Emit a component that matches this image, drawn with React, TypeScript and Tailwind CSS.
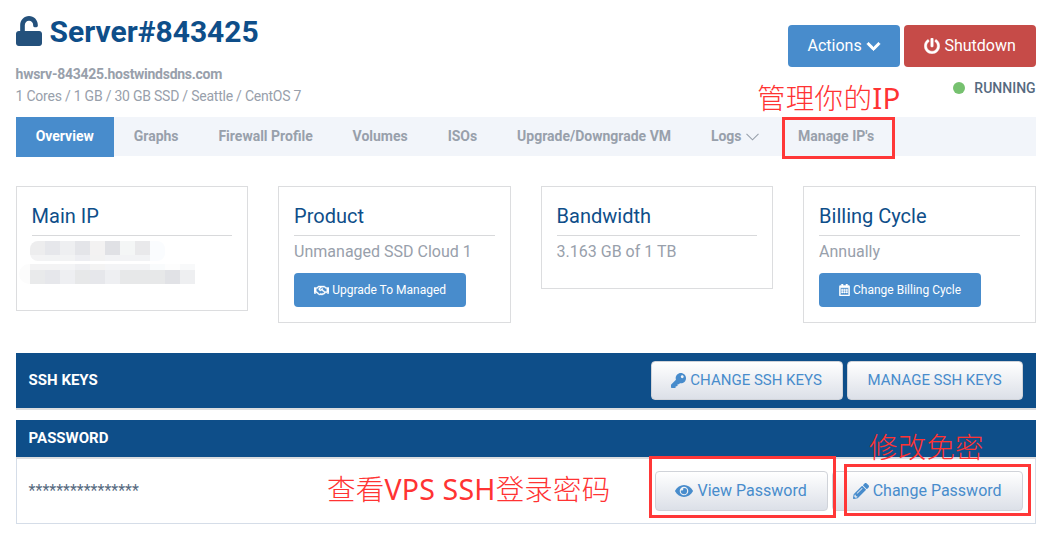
import type { ReactNode } from "react";
import {
  FaUnlock,
  FaChevronDown,
  FaPowerOff,
  FaKey,
  FaPencilAlt,
  FaRegCalendarAlt,
  FaRegHandshake,
} from "react-icons/fa";

const tabs = ["Graphs", "Firewall Profile", "Volumes", "ISOs", "Upgrade/Downgrade VM"];

// Shades of the obscured address blocks, one entry per mosaic cell.
const maskTop = ["#ededee", "#e6e7eb", "#eeeff1", "#e4e5e9", "#f3f2f2", "#e0e1e5", "#f4f6f6", "#e9e9eb", "#fafcfe"];
const maskTopFade = ["#f3f3f4", "#f2f3f4", "#f2f3f4", "#edeef2", "#f2f2f2", "#f2f3f5", "#f2f3f5", "#f2f3f5", "#fafcfe"];
const maskBottomFade = ["#f3f3f4", "#f3f3f4", "#f3f4f6", "#eeeff2", "#f3f3f3", "#f3f4f6", "#f3f4f6", "#f3f4f6", "#f9fbfc", "#fdfdfd", "#f8f9fa"];
const maskBottom = ["#e9eaeb", "#e6e7eb", "#eeeff2", "#e7e8e9", "#e6e7eb", "#eeeff2", "#e7e8e9", "#e7e8e9", "#e7e8e9", "#e1e2e6", "#eeeff1"];

function MaskRow({ colors, height }: { colors: string[]; height: number }) {
  return (
    <div className="flex" style={{ height }}>
      {colors.map((c, i) => (
        <div key={i} className="w-[15px]" style={{ backgroundColor: c }} />
      ))}
    </div>
  );
}

function Card({ title, height, children }: { title: string; height: number; children: ReactNode }) {
  return (
    <div className="border border-[#dcdddf] px-[15px] pt-[13px]" style={{ height }}>
      <h2 className="h-[36px] border-b border-[#d8d9db] text-[20px] leading-[33px] text-[#0e4e89]">{title}</h2>
      {children}
    </div>
  );
}

function BlueButton({ children, className }: { children: ReactNode; className: string }) {
  return (
    <button className={`mt-[6px] flex h-[34px] items-center justify-center gap-[3px] rounded-[4px] bg-[#488ccc] text-[12px] text-white ${className}`}>
      {children}
    </button>
  );
}

function LightButton({ children, className }: { children: ReactNode; className: string }) {
  return (
    <button className={`flex items-center justify-center gap-[4px] rounded-[4px] border border-[#d0d3d9] bg-linear-to-b from-white to-[#dce0e8] text-[#488ccc] ${className}`}>
      {children}
    </button>
  );
}

function EyeIcon() {
  return (
    <svg width="18" height="14" viewBox="0 0 18 14" fill="currentColor">
      <path fillRule="evenodd" d="M9 1C5.3 1 2 3.1.2 6.5a1 1 0 0 0 0 1C2 10.9 5.3 13 9 13s7-2.1 8.8-5.500a1 1 0 0 0 0-1C16 3.100 12.700 1 9 1Zm0 1.700a4.300 4.300 0 1 1 0 8.600 4.300 4.300 0 0 1 0-8.600Z" />
      <path d="M9 3.900a3.100 3.100 0 1 1-3 2.300 1.600 1.600 0 0 0 2.200-2.200c.3-.1.5-.1.8-.1Z" />
    </svg>
  );
}

const note = "absolute font-light text-[#ff3333] [font-family:'Noto_Sans_CJK_SC',sans-serif] text-[28.5px] leading-[36px]";
const noteLatin = "font-normal [font-family:'Noto_Sans',sans-serif]";

export default function App() {
  return (
    <div className="relative h-[539px] w-[1058px] overflow-hidden bg-white pr-[22.4px] pl-[15.6px] whitespace-nowrap [font-family:Roboto,sans-serif]">
      <header className="flex h-[117px] justify-between">
        <div>
          <h1 className="flex h-[62px] items-center gap-[8px] text-[30px] font-bold text-[#0e4e89]">
            <FaUnlock className="size-[30px] w-[26px] text-[#24517c]" preserveAspectRatio="none" />
            <span>Server#843425</span>
          </h1>
          <div className="mt-[1px] h-[22px] text-[14px] leading-[22px] font-bold tracking-[-0.27px] text-[#98a0ab]">hwsrv-843425.hostwindsdns.com</div>
          <div className="text-[14px] leading-[22px] tracking-[-0.23px] text-[#98a0ab]">1 Cores / 1 GB / 30 GB SSD / Seattle / CentOS 7</div>
        </div>
        <div className="pt-[25px]">
          <div className="flex gap-1 text-[16px] text-white">
            <button className="flex h-[42px] w-[112px] items-center justify-center gap-[4px] rounded-[4px] bg-[#488ccc] pl-[1px]">
              Actions <FaChevronDown className="size-[15px] stroke-white stroke-[30]" />
            </button>
            <button className="flex h-[42px] w-[132px] items-center justify-center gap-[4px] rounded-[4px] bg-[#c64b48] pl-[1px]">
              <FaPowerOff className="size-[16px] stroke-white stroke-[12]" /> Shutdown
            </button>
          </div>
          <div className="mt-[10px] flex items-center justify-end gap-[9px] text-[14px] leading-[22px] font-medium text-[#566a80]">
            <span className="size-[12px] rounded-full bg-[#76c16f]" />
            RUNNING
          </div>
        </div>
      </header>

      <nav className="flex h-[39px] bg-[#f2f5fa] text-[14px] leading-[39px] font-bold text-[#98a0ab]">
        <span className="h-[40px] w-[98.2px] bg-[#488ccc] text-center text-white">Overview</span>
        {tabs.map((t) => (
          <span key={t} className="px-[19.95px]">{t}</span>
        ))}
        <span className="flex items-center gap-[4px] px-[19.9px]">
          Logs
          <svg width="13" height="8" viewBox="0 0 13 8" fill="none" stroke="currentColor" strokeWidth="1.1">
            <path d="M.5 .8 6.5 6.8 12.5 .8" />
          </svg>
        </span>
        <span className="px-[19.6px]">Manage IP's</span>
      </nav>

      <section className="mt-[30px] grid h-[167px] grid-cols-4 items-start gap-[30px] text-[16px] text-[#98a0ab]">
        <Card title="Main IP" height={125}>
          <div className="-ml-[2px] mt-[5px] w-[135px] overflow-hidden rounded-[8px]">
            <MaskRow colors={maskTop} height={14} />
            <MaskRow colors={maskTopFade} height={6} />
          </div>
          <div className="-ml-[13px] mt-[3px] flex w-[176px] overflow-hidden rounded-l-[10px]">
            <div className="w-[11px] bg-[#fcfcfc]" />
            <div>
              <MaskRow colors={maskBottomFade} height={6} />
              <MaskRow colors={maskBottom} height={14} />
            </div>
          </div>
        </Card>
        <Card title="Product" height={137}>
          <div className="h-[31px] leading-[31px]">Unmanaged SSD Cloud 1</div>
          <BlueButton className="w-[172px]"><FaRegHandshake className="size-[15px] stroke-white stroke-[16]" />Upgrade To Managed</BlueButton>
        </Card>
        <Card title="Bandwidth" height={103}>
          <div className="h-[31px] leading-[31px]">3.163 GB of 1 TB</div>
        </Card>
        <Card title="Billing Cycle" height={137}>
          <div className="h-[31px] leading-[31px]">Annually</div>
          <BlueButton className="w-[162px]"><FaRegCalendarAlt className="h-[12px] w-[11px] stroke-white stroke-[22]" />Change Billing Cycle</BlueButton>
        </Card>
      </section>

      <section className="flex h-[57px] justify-between border-b-2 border-[#dcdddf] bg-[#0e4e89] pr-[13px] pl-[13px]">
        <h3 className="text-[15px] leading-[55px] font-bold text-white">SSH KEYS</h3>
        <div className="mt-[8px] flex gap-1 text-[15px]">
          <LightButton className="h-[39px] w-[192px]"><FaKey className="size-[15px]" />CHANGE SSH KEYS</LightButton>
          <LightButton className="h-[39px] w-[176px]">MANAGE SSH KEYS</LightButton>
        </div>
      </section>

      <section className="mt-[10px]">
        <h3 className="h-[39px] border-b-2 border-[#dcdddf] bg-[#0e4e89] pl-[13px] text-[15px] leading-[37px] font-bold text-white">PASSWORD</h3>
        <div className="flex h-[65px] justify-between border border-t-0 border-[#d5dde8] pr-[12px] pl-[12px]">
          <span className="text-[16px] leading-[64px] text-[#566a80]">****************</span>
          <div className="mt-[12px] flex gap-1 text-[16px]">
            <LightButton className="h-[40px] w-[173px]"><EyeIcon />View Password</LightButton>
            <LightButton className="h-[40px] w-[191px]"><FaPencilAlt className="size-[16px]" />Change Password</LightButton>
          </div>
        </div>
      </section>

      <div className={`${note} top-[79px] left-[757px] tracking-[0.3px]`}>管理你的<span className={`${noteLatin} text-[29.5px]`}>IP</span></div>
      <div className={`${note} top-[470px] left-[327px] tracking-[0.2px]`}>查看<span className={noteLatin}>VPS SSH</span>登录密码</div>
      <div className={`${note} top-[428px] left-[869px] tracking-[0.2px]`}>修改免密</div>
      <div className="absolute top-[117px] left-[782px] h-[42px] w-[113px] border-3 border-[#ff3737]" />
      <div className="absolute top-[456px] left-[649px] h-[62px] w-[187px] border-3 border-[#ff3737]" />
      <div className="absolute top-[464px] left-[844px] h-[52px] w-[187px] border-3 border-[#ff3737]" />
    </div>
  );
}
